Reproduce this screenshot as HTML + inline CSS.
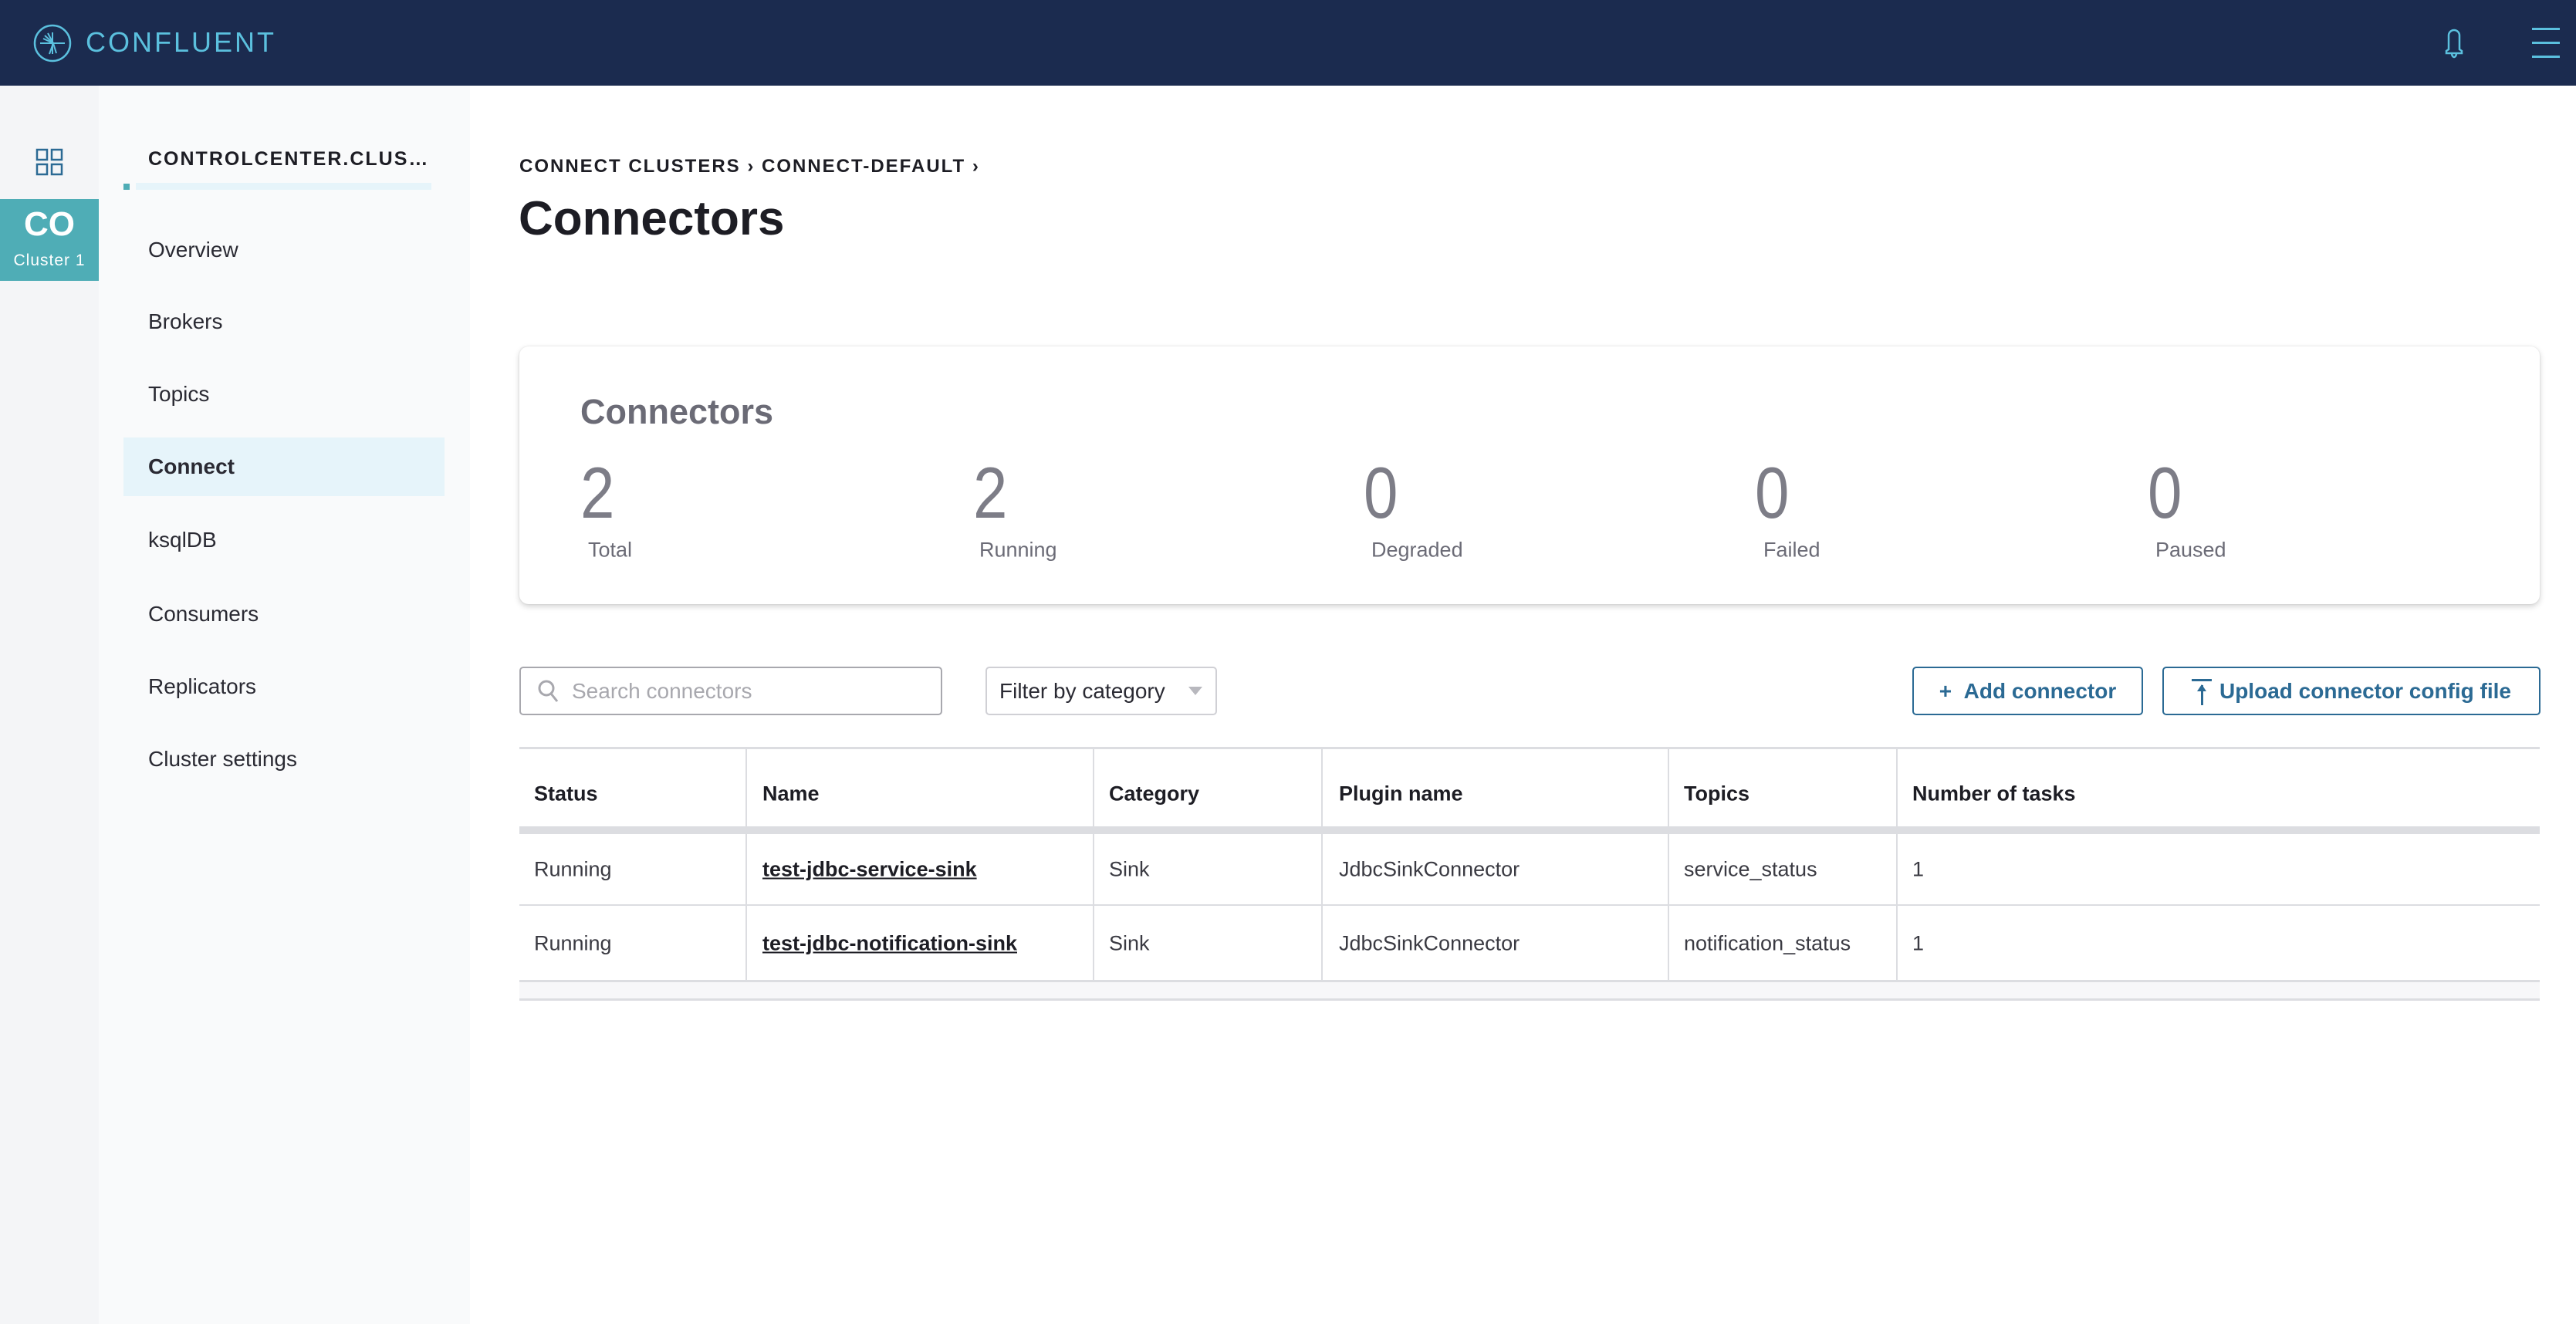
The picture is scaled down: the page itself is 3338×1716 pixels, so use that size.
<!DOCTYPE html>
<html><head><meta charset="utf-8"><style>
*{box-sizing:border-box;margin:0;padding:0}
body{width:3338px;height:1716px;position:relative;overflow:hidden;font-family:"Liberation Sans",sans-serif;background:#fff;color:#1d1d24}
.a{position:absolute;white-space:nowrap}
.hdr{left:0;top:0;width:3338px;height:111px;background:#1b2b4f}
.rail{left:0;top:111px;width:128px;height:1605px;background:#f4f5f7}
.side{left:128px;top:111px;width:481px;height:1605px;background:#f9fafb}
.nav{left:192px;font-size:28px;color:#2a2a33;transform:translateY(-50%)}
.card{left:673px;top:449px;width:2618px;height:334px;background:#fff;border-radius:12px;box-shadow:0 3px 8px rgba(0,0,0,.18),0 0 2px rgba(0,0,0,.1)}
.num{font-size:94px;font-weight:300;color:#7d7d87;transform:translateY(-50%) scaleX(.85);transform-origin:left center}
.lbl{font-size:27px;color:#6b6b76;transform:translateY(-50%)}
.th{font-size:27px;font-weight:bold;transform:translateY(-50%)}
.td{font-size:27px;color:#3a3a42;transform:translateY(-50%)}
.lnk{text-decoration:underline;font-weight:bold;color:#1d1d24}
.vl{width:2px;background:#dcdde1}
.btn{top:864px;height:63px;border:2px solid #2b6a94;border-radius:5px;color:#2b6a94;font-size:28px;font-weight:bold;display:flex;align-items:center;justify-content:center}
</style></head><body>
<div class="a hdr"></div>
<svg class="a" style="left:42px;top:30px" width="52" height="52" viewBox="0 0 52 52"><circle cx="26" cy="26" r="23" fill="none" stroke="#5bc0de" stroke-width="2.5"/><g stroke="#5bc0de" stroke-width="2"><line x1="10" y1="26" x2="42" y2="26"/><line x1="26" y1="12" x2="26" y2="40"/><line x1="16" y1="16" x2="27" y2="26"/><line x1="20" y1="13" x2="27" y2="26"/><line x1="14" y1="20" x2="27" y2="26"/><line x1="27" y1="26" x2="22" y2="40"/><line x1="27" y1="26" x2="31" y2="39"/></g></svg>
<div class="a" style="left:111px;top:34px;font-size:36px;letter-spacing:3px;color:#5bc0de">CONFLUENT</div>
<svg class="a" style="left:3162px;top:34px" width="36" height="44" viewBox="0 0 36 44"><path d="M11 30V12a7 7 0 0 1 14 0v18l3 2v3H8v-3z M15 35a3 5 0 0 0 6 0" fill="none" stroke="#5bc0de" stroke-width="2.5"/></svg>
<div class="a" style="left:3281px;top:36px;width:36px;height:3px;background:#5bc0de"></div>
<div class="a" style="left:3281px;top:54px;width:36px;height:3px;background:#5bc0de"></div>
<div class="a" style="left:3281px;top:72px;width:36px;height:3px;background:#5bc0de"></div>
<div class="a rail"></div>
<div class="a side"></div>
<svg class="a" style="left:46px;top:192px" width="36" height="36" viewBox="0 0 36 36"><g fill="none" stroke="#2b6a94" stroke-width="2.5"><rect x="2" y="2" width="13" height="13"/><rect x="21" y="2" width="13" height="13"/><rect x="2" y="21" width="13" height="13"/><rect x="21" y="21" width="13" height="13"/></g></svg>
<div class="a" style="left:0;top:258px;width:128px;height:106px;background:#4fadb6"></div>
<div class="a" style="left:0;top:266px;width:128px;text-align:center;color:#fff;font-size:44px;font-weight:bold">CO</div>
<div class="a" style="left:0;top:326px;width:128px;text-align:center;color:#fff;font-size:21px;letter-spacing:1px">Cluster 1</div>
<div class="a" style="left:192px;top:192px;font-size:25px;font-weight:bold;letter-spacing:2px;color:#1d1d24">CONTROLCENTER.CLUS…</div>
<div class="a" style="left:160px;top:238px;width:8px;height:8px;background:#4fadb6"></div>
<div class="a" style="left:176px;top:237px;width:383px;height:9px;background:#e6f4fa"></div>
<div class="a nav" style="top:324px">Overview</div>
<div class="a nav" style="top:417px">Brokers</div>
<div class="a nav" style="top:511px">Topics</div>
<div class="a" style="left:160px;top:567px;width:416px;height:76px;background:#e6f4fa"></div>
<div class="a nav" style="top:605px;font-weight:bold">Connect</div>
<div class="a nav" style="top:700px">ksqlDB</div>
<div class="a nav" style="top:796px">Consumers</div>
<div class="a nav" style="top:890px">Replicators</div>
<div class="a nav" style="top:984px">Cluster settings</div>
<div class="a" style="left:673px;top:202px;font-size:24px;font-weight:bold;letter-spacing:2px">CONNECT CLUSTERS &#8250; CONNECT-DEFAULT &#8250;</div>
<div class="a" style="left:672px;top:248px;font-size:62px;font-weight:bold">Connectors</div>
<div class="a card"></div>
<div class="a" style="left:752px;top:508px;font-size:45px;font-weight:bold;color:#6b6b76">Connectors</div>
<div class="a num" style="left:752px;top:639px">2</div><div class="a lbl" style="left:762px;top:713px">Total</div>
<div class="a num" style="left:1261px;top:639px">2</div><div class="a lbl" style="left:1269px;top:713px">Running</div>
<div class="a num" style="left:1767px;top:639px">0</div><div class="a lbl" style="left:1777px;top:713px">Degraded</div>
<div class="a num" style="left:2274px;top:639px">0</div><div class="a lbl" style="left:2285px;top:713px">Failed</div>
<div class="a num" style="left:2783px;top:639px">0</div><div class="a lbl" style="left:2793px;top:713px">Paused</div>
<div class="a" style="left:673px;top:864px;width:548px;height:63px;border:2px solid #a8a8ae;border-radius:5px"></div>
<svg class="a" style="left:696px;top:880px" width="30" height="32" viewBox="0 0 30 32"><circle cx="12" cy="12" r="9" fill="none" stroke="#a8a8ae" stroke-width="3"/><line x1="18" y1="19" x2="26" y2="29" stroke="#a8a8ae" stroke-width="3"/></svg>
<div class="a" style="left:741px;top:880px;font-size:28px;color:#a8a8ae">Search connectors</div>
<div class="a" style="left:1277px;top:864px;width:300px;height:63px;border:2px solid #d0d0d5;border-radius:5px"></div>
<div class="a" style="left:1295px;top:880px;font-size:28px;color:#2a2a33">Filter by category</div>
<div class="a" style="left:1540px;top:890px;width:0;height:0;border-left:9px solid transparent;border-right:9px solid transparent;border-top:11px solid #b8b8be"></div>
<div class="a btn" style="left:2478px;width:299px">+&nbsp;&nbsp;Add connector</div>
<div class="a btn" style="left:2802px;width:490px"><span style="display:inline-block;position:relative;width:26px;height:36px;margin-right:10px"><span style="position:absolute;left:0;top:2px;width:26px;height:3px;background:#2b6a94"></span><span style="position:absolute;left:12px;top:10px;width:3px;height:26px;background:#2b6a94"></span><span style="position:absolute;left:7px;top:9px;width:0;height:0;border-left:6.5px solid transparent;border-right:6.5px solid transparent;border-bottom:9px solid #2b6a94"></span></span>Upload connector config file</div>
<div class="a" style="left:673px;top:968px;width:2618px;height:3px;background:#dcdde1"></div>
<div class="a" style="left:673px;top:1071px;width:2618px;height:10px;background:#dcdde1"></div>
<div class="a" style="left:673px;top:1172px;width:2618px;height:2px;background:#dcdde1"></div>
<div class="a" style="left:673px;top:1270px;width:2618px;height:27px;background:#f7f7f9;border-top:3px solid #dcdde1;border-bottom:3px solid #dcdde1"></div>
<div class="a vl" style="left:966px;top:971px;height:300px"></div>
<div class="a vl" style="left:1416px;top:971px;height:300px"></div>
<div class="a vl" style="left:1712px;top:971px;height:300px"></div>
<div class="a vl" style="left:2161px;top:971px;height:300px"></div>
<div class="a vl" style="left:2457px;top:971px;height:300px"></div>
<div class="a th" style="left:692px;top:1029px">Status</div>
<div class="a th" style="left:988px;top:1029px">Name</div>
<div class="a th" style="left:1437px;top:1029px">Category</div>
<div class="a th" style="left:1735px;top:1029px">Plugin name</div>
<div class="a th" style="left:2182px;top:1029px">Topics</div>
<div class="a th" style="left:2478px;top:1029px">Number of tasks</div>
<div class="a td" style="left:692px;top:1127px">Running</div>
<div class="a td lnk" style="left:988px;top:1127px">test-jdbc-service-sink</div>
<div class="a td" style="left:1437px;top:1127px">Sink</div>
<div class="a td" style="left:1735px;top:1127px">JdbcSinkConnector</div>
<div class="a td" style="left:2182px;top:1127px">service_status</div>
<div class="a td" style="left:2478px;top:1127px">1</div>
<div class="a td" style="left:692px;top:1223px">Running</div>
<div class="a td lnk" style="left:988px;top:1223px">test-jdbc-notification-sink</div>
<div class="a td" style="left:1437px;top:1223px">Sink</div>
<div class="a td" style="left:1735px;top:1223px">JdbcSinkConnector</div>
<div class="a td" style="left:2182px;top:1223px">notification_status</div>
<div class="a td" style="left:2478px;top:1223px">1</div>
</body></html>
